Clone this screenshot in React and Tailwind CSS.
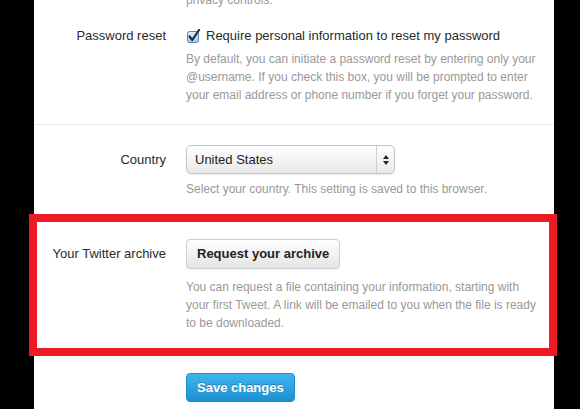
import React from "react";

const font = { fontFamily: '"Liberation Sans", Arial, sans-serif' };

function CheckBox() {
  return (
    <svg width="15" height="15" viewBox="0 0 15 15" className="shrink-0">
      <defs>
        <linearGradient id="cb" x1="0" y1="0" x2="0" y2="1">
          <stop offset="0" stopColor="#e4eefb" />
          <stop offset="1" stopColor="#a9c6ea" />
        </linearGradient>
      </defs>
      <rect x="1.5" y="2.5" width="11" height="11" rx="2" fill="url(#cb)" stroke="#5f82b3" />
      <path d="M3.5 7.5 L6.3 11 L13 1" fill="none" stroke="#1c2d4a" strokeWidth="2.2" strokeLinecap="round" strokeLinejoin="round" />
    </svg>
  );
}

function SelectArrows() {
  return (
    <svg width="6" height="10" viewBox="0 0 6 10">
      <path d="M3 0 L6 4 L0 4 Z" fill="#222" />
      <path d="M3 10 L6 6 L0 6 Z" fill="#222" />
    </svg>
  );
}

function Row({ label, labelClass = "leading-[18px]", children }) {
  return (
    <div className="grid grid-cols-[132px_1fr] gap-x-5">
      <div className={`text-right text-[13px] text-[#2a2a2a] ${labelClass}`}>{label}</div>
      <div>{children}</div>
    </div>
  );
}

export default function App() {
  return (
    <div className="relative w-[580px] h-[409px] overflow-hidden bg-black" style={font}>
      <div className="ml-[34px] w-[520px] h-full bg-white">
        {/* password section */}
        <div className="border-b border-[#ebebeb] pb-5">
          <Row label="">
            <p className="mt-[-9px] text-[12px] leading-[18px] text-[#999]">privacy controls.</p>
          </Row>
          <div className="mt-[18px]">
            <Row label="Password reset">
              <label className="flex items-center gap-[5px] text-[13px] leading-[18px] text-[#2a2a2a] whitespace-nowrap">
                <CheckBox />
                Require personal information to reset my password
              </label>
              <p className="mt-[5px] text-[12px] leading-[18px] text-[#999] whitespace-nowrap">
                By default, you can initiate a password reset by entering only your
                <br />
                @username. If you check this box, you will be prompted to enter
                <br />
                your email address or phone number if you forget your password.
              </p>
            </Row>
          </div>
        </div>

        {/* country */}
        <div className="pt-5">
          <Row label="Country" labelClass="leading-[29px]">
            <div className="flex w-[209px] h-[29px] rounded-[5px] border border-[#c4c4c4] bg-gradient-to-b from-white to-[#e9e9e9] shadow-[0_1px_1px_rgba(0,0,0,0.08)]">
              <span className="flex-1 pl-[8px] text-[13px] leading-[27px] text-[#222]">United States</span>
              <span className="flex w-[18px] items-center justify-center border-l border-[#cfcfcf]">
                <SelectArrows />
              </span>
            </div>
            <p className="mt-[6px] text-[12px] leading-[18px] text-[#999] whitespace-nowrap">
              Select your country. This setting is saved to this browser.
            </p>
          </Row>
        </div>

        {/* archive */}
        <div className="pt-[41px]">
          <Row label="Your Twitter archive" labelClass="leading-[30px]">
            <button className="h-[30px] px-[10px] rounded-[4px] border border-[#cdcdcd] bg-gradient-to-b from-white to-[#e4e4e4] text-[13px] font-bold text-[#222] shadow-[0_1px_1px_rgba(0,0,0,0.06)]">
              Request your archive
            </button>
            <p className="mt-[9px] text-[12px] leading-[18px] text-[#999] whitespace-nowrap">
              You can request a file containing your information, starting with
              <br />
              your first Tweet. A link will be emailed to you when the file is ready
              <br />
              to be downloaded.
            </p>
          </Row>
        </div>

        <div className="pt-[41px]">
          <Row label="">
            <button className="h-[29px] px-[10px] rounded-[4px] border border-[#1a8ccc] bg-gradient-to-b from-[#3fb6ee] to-[#1b8fd2] text-[13px] font-bold text-white [text-shadow:0_-1px_0_rgba(0,0,0,0.25)]">
              Save changes
            </button>
          </Row>
        </div>
      </div>

      {/* red highlight annotation */}
      <div className="absolute left-[29px] top-[214px] w-[528px] h-[142px] border-8 border-[#ed1c24]" />
    </div>
  );
}
